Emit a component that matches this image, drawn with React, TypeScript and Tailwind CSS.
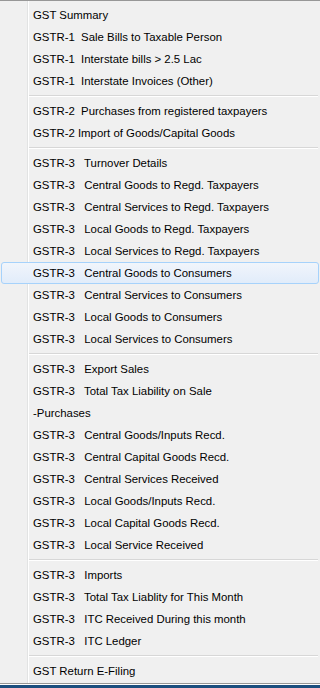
import React from 'react';

type Item = { label: string; active?: boolean };

const groups: Item[][] = [
  [
    { label: 'GST Summary' },
    { label: 'GSTR-1  Sale Bills to Taxable Person' },
    { label: 'GSTR-1  Interstate bills > 2.5 Lac' },
    { label: 'GSTR-1  Interstate Invoices (Other)' },
  ],
  [
    { label: 'GSTR-2  Purchases from registered taxpayers' },
    { label: 'GSTR-2 Import of Goods/Capital Goods' },
  ],
  [
    { label: 'GSTR-3   Turnover Details' },
    { label: 'GSTR-3   Central Goods to Regd. Taxpayers' },
    { label: 'GSTR-3   Central Services to Regd. Taxpayers' },
    { label: 'GSTR-3   Local Goods to Regd. Taxpayers' },
    { label: 'GSTR-3   Local Services to Regd. Taxpayers' },
    { label: 'GSTR-3   Central Goods to Consumers', active: true },
    { label: 'GSTR-3   Central Services to Consumers' },
    { label: 'GSTR-3   Local Goods to Consumers' },
    { label: 'GSTR-3   Local Services to Consumers' },
  ],
  [
    { label: 'GSTR-3   Export Sales' },
    { label: 'GSTR-3   Total Tax Liability on Sale' },
    { label: '-Purchases' },
    { label: 'GSTR-3   Central Goods/Inputs Recd.' },
    { label: 'GSTR-3   Central Capital Goods Recd.' },
    { label: 'GSTR-3   Central Services Received' },
    { label: 'GSTR-3   Local Goods/Inputs Recd.' },
    { label: 'GSTR-3   Local Capital Goods Recd.' },
    { label: 'GSTR-3   Local Service Received' },
  ],
  [
    { label: 'GSTR-3   Imports' },
    { label: 'GSTR-3   Total Tax Liablity for This Month' },
    { label: 'GSTR-3   ITC Received During this month' },
    { label: 'GSTR-3   ITC Ledger' },
  ],
  [{ label: 'GST Return E-Filing' }],
];

const MenuRow: React.FC<{ item: Item }> = ({ item }) =>
  item.active ? (
    <div className="mx-px flex h-[22px] items-center whitespace-pre rounded-[3px] border border-[#a6d2fb] bg-[linear-gradient(to_bottom,#f1f5fb,#e1ecfa)] pt-px pl-[31px] text-black">
      {item.label}
    </div>
  ) : (
    <div className="flex h-[22px] items-center whitespace-pre pt-px pl-[33px] text-black">{item.label}</div>
  );

const Separator: React.FC = () => (
  <div className="flex h-[8px] flex-col justify-center pl-[29px] pr-[2px]">
    <div className="h-px bg-[#d7d7d7]" />
    <div className="h-px bg-white" />
  </div>
);

export default function App() {
  return (
    <div className="flex h-[688px] w-[320px] flex-col overflow-hidden bg-white font-['Liberation_Sans',Arial,sans-serif] text-[11.4px]">
      <div className="border-t border-b border-[#979797] bg-[#f0f0f0] bg-[linear-gradient(to_right,transparent_27px,#e2e3e3_27px,#e2e3e3_28px,#ffffff_28px,#ffffff_29px,transparent_29px)] pt-[3px] pb-px">
        {groups.map((g, gi) => (
          <React.Fragment key={gi}>
            {gi > 0 && <Separator />}
            {g.map((item) => (
              <MenuRow key={item.label} item={item} />
            ))}
          </React.Fragment>
        ))}
      </div>
      <div className="h-px bg-white" />
      <div className="flex-1 bg-[#1b4e7e]" />
    </div>
  );
}
